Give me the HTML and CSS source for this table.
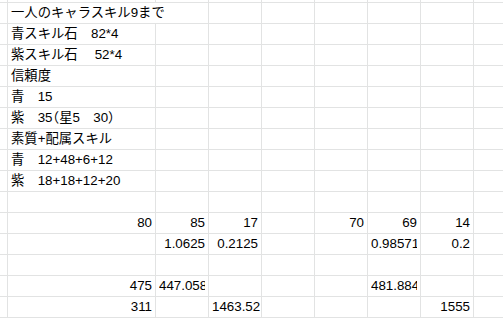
FILE: index.html
```html
<!DOCTYPE html>
<html lang="ja">
<head>
<meta charset="utf-8">
<title>Sheet</title>
<link rel="stylesheet" href="styles.css">
</head>
<body>
<div class="sheet">
  <!-- row 0 (partial) -->
  <div class="c"></div><div class="c"></div><div class="c"></div><div class="c"></div><div class="c"></div><div class="c"></div><div class="c"></div><div class="c"></div><div class="c"></div>
  <!-- row 1 -->
  <div class="c"></div><div class="c span2">一人のキャラスキル9まで</div><div class="c"></div><div class="c"></div><div class="c"></div><div class="c"></div><div class="c"></div><div class="c"></div>
  <!-- row 2 -->
  <div class="c"></div><div class="c">青スキル石　82*4</div><div class="c"></div><div class="c"></div><div class="c"></div><div class="c"></div><div class="c"></div><div class="c"></div><div class="c"></div>
  <!-- row 3 -->
  <div class="c"></div><div class="c">紫スキル石　 52*4</div><div class="c"></div><div class="c"></div><div class="c"></div><div class="c"></div><div class="c"></div><div class="c"></div><div class="c"></div>
  <!-- row 4 -->
  <div class="c"></div><div class="c">信頼度</div><div class="c"></div><div class="c"></div><div class="c"></div><div class="c"></div><div class="c"></div><div class="c"></div><div class="c"></div>
  <!-- row 5 -->
  <div class="c"></div><div class="c">青　15</div><div class="c"></div><div class="c"></div><div class="c"></div><div class="c"></div><div class="c"></div><div class="c"></div><div class="c"></div>
  <!-- row 6 -->
  <div class="c"></div><div class="c">紫　35<span class="p">（</span>星5　30<span class="p">）</span></div><div class="c"></div><div class="c"></div><div class="c"></div><div class="c"></div><div class="c"></div><div class="c"></div><div class="c"></div>
  <!-- row 7 -->
  <div class="c"></div><div class="c">素質+配属スキル</div><div class="c"></div><div class="c"></div><div class="c"></div><div class="c"></div><div class="c"></div><div class="c"></div><div class="c"></div>
  <!-- row 8 -->
  <div class="c"></div><div class="c">青　12+48+6+12</div><div class="c"></div><div class="c"></div><div class="c"></div><div class="c"></div><div class="c"></div><div class="c"></div><div class="c"></div>
  <!-- row 9 -->
  <div class="c"></div><div class="c">紫　18+18+12+20</div><div class="c"></div><div class="c"></div><div class="c"></div><div class="c"></div><div class="c"></div><div class="c"></div><div class="c"></div>
  <!-- row 10 -->
  <div class="c"></div><div class="c"></div><div class="c"></div><div class="c"></div><div class="c"></div><div class="c"></div><div class="c"></div><div class="c"></div><div class="c"></div>
  <!-- row 11 -->
  <div class="c"></div><div class="c r">80</div><div class="c r">85</div><div class="c r">17</div><div class="c"></div><div class="c r">70</div><div class="c r">69</div><div class="c r">14</div><div class="c"></div>
  <!-- row 12 -->
  <div class="c"></div><div class="c"></div><div class="c r">1.0625</div><div class="c r">0.2125</div><div class="c"></div><div class="c"></div><div class="c"><span class="clip">0.9857142857</span></div><div class="c r">0.2</div><div class="c"></div>
  <!-- row 13 -->
  <div class="c"></div><div class="c"></div><div class="c"></div><div class="c"></div><div class="c"></div><div class="c"></div><div class="c"></div><div class="c"></div><div class="c"></div>
  <!-- row 14 -->
  <div class="c"></div><div class="c r">475</div><div class="c"><span class="clip">447.0588235</span></div><div class="c"></div><div class="c"></div><div class="c"></div><div class="c"><span class="clip">481.8842857</span></div><div class="c"></div><div class="c"></div>
  <!-- row 15 -->
  <div class="c"></div><div class="c r">311</div><div class="c"></div><div class="c r">1463.52</div><div class="c"></div><div class="c"></div><div class="c"></div><div class="c r">1555</div><div class="c"></div>
  <!-- row 16 (below the frame) -->
  <div class="c"></div><div class="c"></div><div class="c"></div><div class="c"></div><div class="c"></div><div class="c"></div><div class="c"></div><div class="c"></div><div class="c"></div>
</div>
</body>
</html>
```
FILE: styles.css
```css
html, body {
  margin: 0;
  padding: 0;
  background: #ffffff;
  overflow: hidden;
}

body {
  width: 503px;
  height: 318px;
}

.sheet {
  display: grid;
  grid-template-columns: 7px 147px repeat(6, 52px) 29px;
  grid-template-rows: 2px repeat(15, 20px) 0px;
  gap: 1px;
  background: #e2e3e3;
  width: 503px;
  font-family: "Liberation Sans", Arial, "Noto Sans CJK JP", sans-serif;
  font-size: 13.33px;
  color: #000000;
}

.c {
  background: #ffffff;
  padding: 0 3px;
  line-height: 20px;
  white-space: nowrap;
  overflow: hidden;
  min-width: 0;
}

.span2 {
  grid-column: span 2;
}

.r {
  text-align: right;
}

.clip {
  display: block;
  overflow: hidden;
}

.p {
  font-feature-settings: "halt";
}
```
